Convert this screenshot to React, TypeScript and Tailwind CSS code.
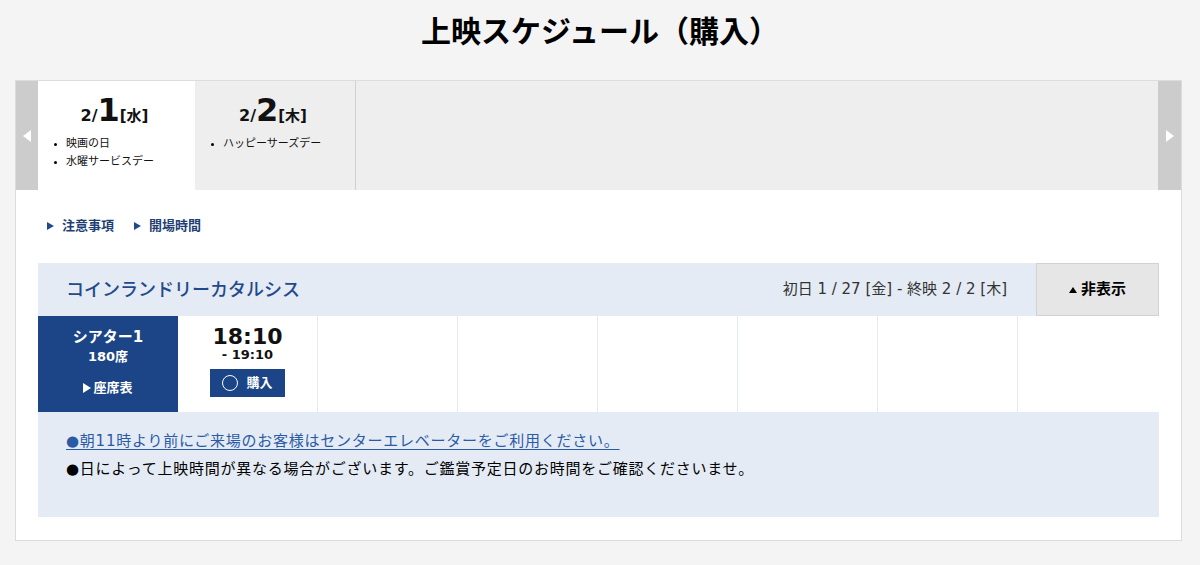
const FONT = { fontFamily: '"DejaVu Sans", "Noto Sans CJK JP", sans-serif' };

const TABS = [
  { m: "2/", d: "1", w: "[水]", notes: ["映画の日", "水曜サービスデー"], active: true },
  { m: "2/", d: "2", w: "[木]", notes: ["ハッピーサーズデー"], active: false },
];

export default function App() {
  return (
    <div className="min-h-screen bg-[#f4f4f4] text-[#111]" style={FONT}>
      <h1 className="h-[80px] pt-[12px] text-center text-[30px] font-bold leading-[40px] text-black">
        上映スケジュール（購入）
      </h1>

      <div className="mx-[15px] w-[1167px] border border-[#dcdcdc] bg-white">
        {/* date tabs */}
        <div className="flex h-[109px] bg-[#eeeeee]">
          <div className="flex w-[22px] items-center justify-center bg-[#cccccc]">
            <span className="h-0 w-0 border-y-[6px] border-r-[8px] border-y-transparent border-r-white" />
          </div>
          {TABS.map((t) => (
            <div
              key={t.d}
              className={
                t.active
                  ? "w-[157px] bg-white pt-[10px]"
                  : "w-[161px] border-r border-[#d0d0d0] bg-[#eeeeee] pt-[10px]"
              }
            >
              <div className="flex items-baseline justify-center pr-[4px] font-bold leading-[38px]">
                <span className="text-[16px]">{t.m}</span>
                <span className="text-[32px]">{t.d}</span>
                <span className="text-[15px]">{t.w}</span>
              </div>
              <ul className="pl-[16px] text-[11px] leading-[18px]">
                {t.notes.map((n) => (
                  <li key={n} className="flex items-center gap-[9px]">
                    <span className="h-[3px] w-[3px] rounded-full bg-black" />
                    {n}
                  </li>
                ))}
              </ul>
            </div>
          ))}
          <div className="flex-1" />
          <div className="flex w-[23px] items-center justify-center bg-[#cccccc]">
            <span className="h-0 w-0 border-y-[6px] border-l-[8px] border-y-transparent border-l-white" />
          </div>
        </div>

        <div className="px-[22px] pb-[23px]">
          {/* links */}
          <div className="flex h-[73px] items-center gap-[20px] pb-[1px] pl-[9px] text-[13px] font-bold text-[#1f3f74]">
            <span className="flex items-center gap-[8px]">
              <span className="h-0 w-0 border-y-[4px] border-l-[7px] border-y-transparent border-l-[#1f4a8c]" />
              注意事項
            </span>
            <span className="flex items-center gap-[8px]">
              <span className="h-0 w-0 border-y-[4px] border-l-[7px] border-y-transparent border-l-[#1f4a8c]" />
              開場時間
            </span>
          </div>

          {/* movie */}
          <div className="bg-[#e4ebf4]">
            <div className="flex h-[53px] items-center">
              <div className="flex-1 pl-[28px] text-[18px] font-medium text-[#1f4a8c]">
                コインランドリーカタルシス
              </div>
              <div className="pr-[29px] text-[15px] text-[#333]">初日 1 / 27 [金] - 終映 2 / 2 [木]</div>
              <button className="flex h-[53px] w-[123px] items-center justify-center gap-[4px] border border-[#d2d2d2] bg-[#e6e6e6] text-[15px] font-bold text-black">
                <span className="h-0 w-0 border-x-[4px] border-b-[6px] border-x-transparent border-b-black" />
                非表示
              </button>
            </div>

            <div className="flex h-[96px] bg-white">
              <div className="flex w-[140px] flex-col items-center bg-[#1b4586] pt-[10px] font-bold text-white">
                <div className="text-[15px] leading-[22px]">シアター1</div>
                <div className="text-[13px] leading-[18px]">180席</div>
                <div className="mt-[13px] flex items-center gap-[2px] text-[13px] leading-[18px]">
                  <span className="h-0 w-0 border-y-[5px] border-l-[8px] border-y-transparent border-l-white" />
                  座席表
                </div>
              </div>
              <div className="flex w-[140px] flex-col items-center border-r border-[#e4ebf4] pt-[10px]">
                <div className="text-[22px] font-bold leading-[22px]">18:10</div>
                <div className="text-[13px] font-bold leading-[14px]">- 19:10</div>
                <button className="mt-[7px] flex h-[28px] w-[75px] items-center justify-center gap-[8px] bg-[#1b4586] text-[13px] font-bold text-white">
                  <span className="h-[16px] w-[16px] rounded-full border-[1.5px] border-white" />
                  購入
                </button>
              </div>
              {[0, 1, 2, 3, 4, 5].map((i) => (
                <div key={i} className="w-[140px] border-r border-[#e4ebf4] last:border-r-0" />
              ))}
            </div>

            <div className="h-[105px] pl-[28px] pt-[15px] text-[15px] leading-[28px] tracking-[0.75px]">
              <div>
                <a className="text-[#2b5ba6] underline underline-offset-[3px]">
                  ●朝11時より前にご来場のお客様はセンターエレベーターをご利用ください。
                </a>
              </div>
              <div className="text-black">●日によって上映時間が異なる場合がございます。ご鑑賞予定日のお時間をご確認くださいませ。</div>
            </div>
          </div>
        </div>
      </div>
    </div>
  );
}
